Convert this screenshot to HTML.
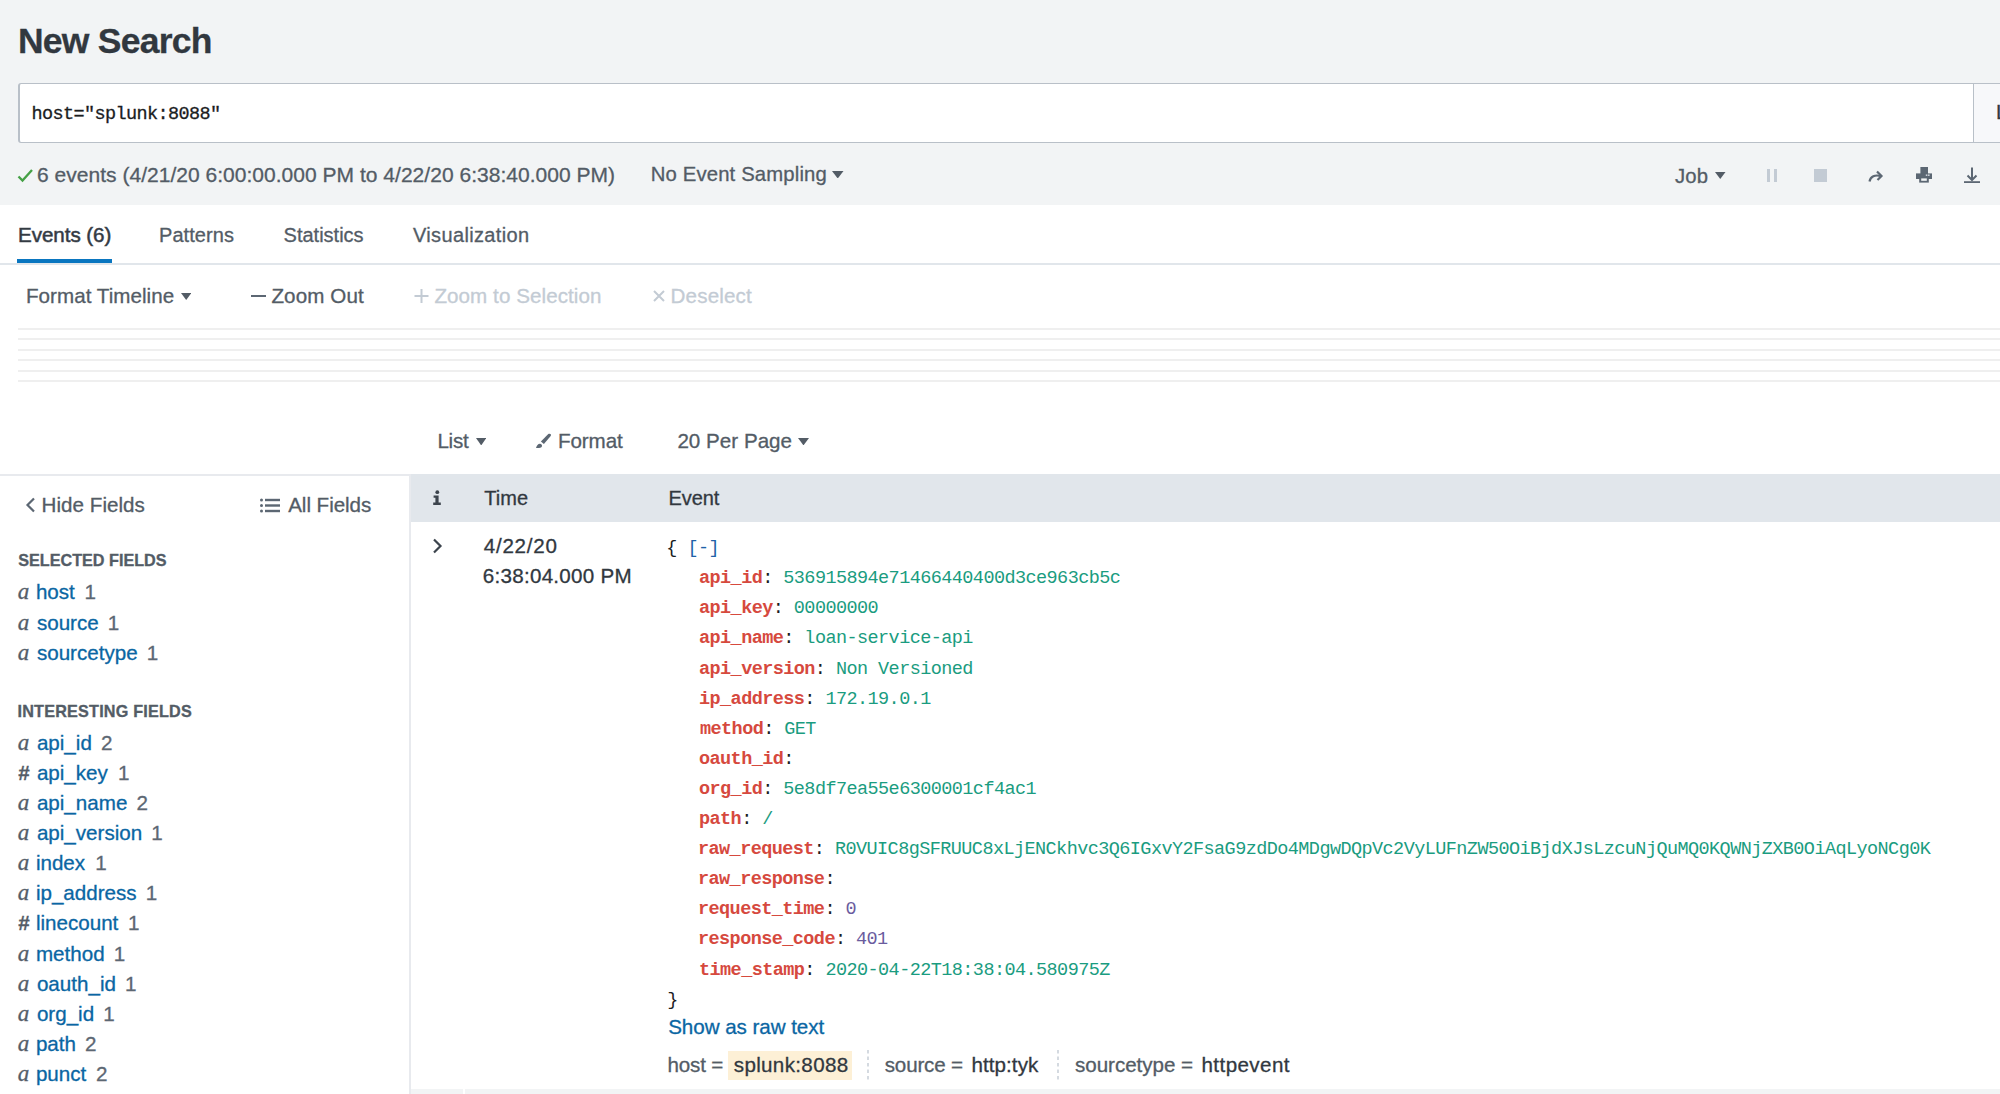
<!DOCTYPE html>
<html><head><meta charset="utf-8"><style>
html,body{margin:0;padding:0;width:2000px;height:1094px;overflow:hidden;background:#fff;position:relative}
.t{position:absolute;line-height:1;white-space:pre;-webkit-text-stroke-width:0.3px}
b{font-weight:bold}
</style></head><body>
<div style="position:absolute;left:0;top:0;width:2000px;height:205px;background:#f2f4f5"></div>
<div style="position:absolute;left:18px;top:83px;width:2000px;height:58px;border:1px solid #b9c0c8;border-left-width:2px;border-radius:3px;background:#fff"></div>
<div style="position:absolute;left:1973px;top:84px;width:27px;height:58px;background:#f7f8fa;border-left:1px solid #b9c0c8"></div>
<svg style="position:absolute;left:17px;top:168px" width="17" height="15" viewBox="0 0 17 15"><path d="M1.5 8.5 L5.5 12.5 L15 2" fill="none" stroke="#45a045" stroke-width="2.3"/></svg>
<svg style="position:absolute;left:832px;top:170.7px" width="11.5" height="7.5" viewBox="0 0 10 7" preserveAspectRatio="none"><path d="M0 0 L10 0 L5 7 Z" fill="#535c66"/></svg>
<svg style="position:absolute;left:1715px;top:172px" width="10.5" height="7" viewBox="0 0 10 7" preserveAspectRatio="none"><path d="M0 0 L10 0 L5 7 Z" fill="#535c66"/></svg>
<svg style="position:absolute;left:181px;top:293px" width="10.400000000000006" height="7" viewBox="0 0 10 7" preserveAspectRatio="none"><path d="M0 0 L10 0 L5 7 Z" fill="#535c66"/></svg>
<svg style="position:absolute;left:475.6px;top:437.6px" width="10.399999999999977" height="7.399999999999977" viewBox="0 0 10 7" preserveAspectRatio="none"><path d="M0 0 L10 0 L5 7 Z" fill="#535c66"/></svg>
<svg style="position:absolute;left:798px;top:437.6px" width="11" height="7.399999999999977" viewBox="0 0 10 7" preserveAspectRatio="none"><path d="M0 0 L10 0 L5 7 Z" fill="#535c66"/></svg>
<div style="position:absolute;left:1767px;top:169px;width:3px;height:13px;background:#c3cbd4"></div>
<div style="position:absolute;left:1774px;top:169px;width:3px;height:13px;background:#c3cbd4"></div>
<div style="position:absolute;left:1813.5px;top:169px;width:13px;height:13px;background:#c3cbd4"></div>
<svg style="position:absolute;left:1868px;top:170px" width="16" height="13" viewBox="0 0 16 13"><path d="M1.5 11.5 C2.5 6.5 7 4.5 12.5 6" fill="none" stroke="#5c6773" stroke-width="2.2"/><path d="M9 1.5 L13.5 6 L9.5 10" fill="none" stroke="#5c6773" stroke-width="2.2"/></svg>
<svg style="position:absolute;left:1916px;top:167px" width="16" height="16" viewBox="0 0 16 16"><rect x="4.4" y="0" width="7.6" height="7" fill="#5c6773"/><rect x="0" y="6.4" width="16" height="5.6" fill="#5c6773"/><rect x="3.2" y="10.4" width="9.6" height="5.2" fill="#5c6773"/><rect x="5.2" y="11.4" width="5.6" height="2.4" fill="#f2f4f5"/><rect x="9.8" y="7.4" width="1.6" height="1.6" fill="#c9cfd6"/><rect x="12" y="7.4" width="1.6" height="1.6" fill="#c9cfd6"/></svg>
<svg style="position:absolute;left:1964px;top:167px" width="16" height="16" viewBox="0 0 16 16"><path d="M8 0.5 V13" stroke="#5c6773" stroke-width="2" fill="none"/><path d="M3.5 8.5 L8 13 L12.5 8.5" stroke="#5c6773" stroke-width="2" fill="none"/><rect x="0" y="14.2" width="16" height="1.8" fill="#5c6773"/></svg>
<div style="position:absolute;left:0;top:263px;width:2000px;height:2px;background:#e1e6eb"></div>
<div style="position:absolute;left:17px;top:259px;width:95px;height:4px;background:#0a76c0"></div>
<div style="position:absolute;left:251px;top:295px;width:14.5px;height:2px;background:#5c6773"></div>
<svg style="position:absolute;left:414px;top:289px" width="15" height="14" viewBox="0 0 15 14"><path d="M7.5 0 V14 M0.5 7 H14.5" stroke="#c3cbd4" stroke-width="2"/></svg>
<svg style="position:absolute;left:653px;top:290px" width="12" height="12" viewBox="0 0 12 12"><path d="M1 1 L11 11 M11 1 L1 11" stroke="#c3cbd4" stroke-width="2"/></svg>
<div style="position:absolute;left:18px;top:328px;width:1982px;height:2px;background:#efefef"></div>
<div style="position:absolute;left:18px;top:338px;width:1982px;height:2px;background:#efefef"></div>
<div style="position:absolute;left:18px;top:349px;width:1982px;height:2px;background:#efefef"></div>
<div style="position:absolute;left:18px;top:359px;width:1982px;height:2px;background:#efefef"></div>
<div style="position:absolute;left:18px;top:370px;width:1982px;height:2px;background:#efefef"></div>
<div style="position:absolute;left:18px;top:380px;width:1982px;height:2px;background:#efefef"></div>
<svg style="position:absolute;left:535px;top:433px" width="17" height="17" viewBox="0 0 17 17"><path d="M13.3 1.1 C14.1 0.4 15.3 0.5 15.8 1.3 C16.1 1.9 16 2.4 15.7 2.9 L8.9 10.9 L5.9 8.4 Z" fill="#5c6773"/><path d="M1 14.9 C1.8 12.6 3 10.6 5.1 10.7 C6.9 10.9 7.6 12.7 6.6 14 C5.6 15.1 3.2 15.2 1 14.9 Z" fill="#5c6773"/></svg>
<div style="position:absolute;left:0;top:474px;width:2000px;height:2px;background:#e8eaee"></div>
<div style="position:absolute;left:409px;top:474px;width:2px;height:620px;background:#e8eaee"></div>
<div style="position:absolute;left:411px;top:474px;width:1589px;height:48px;background:#e1e6eb"></div>
<svg style="position:absolute;left:25px;top:497px" width="11" height="16" viewBox="0 0 11 16"><path d="M9 1.5 L2.5 8 L9 14.5" fill="none" stroke="#5c6773" stroke-width="2.2"/></svg>
<svg style="position:absolute;left:260px;top:498px" width="21" height="15" viewBox="0 0 21 15"><g fill="#5c6773"><circle cx="1.5" cy="2" r="1.5"/><circle cx="1.5" cy="7.5" r="1.5"/><circle cx="1.5" cy="13" r="1.5"/><rect x="5" y="0.8" width="15" height="2.4"/><rect x="5" y="6.3" width="15" height="2.4"/><rect x="5" y="11.8" width="15" height="2.4"/></g></svg>
<svg style="position:absolute;left:433px;top:490px" width="8" height="15" viewBox="0 0 8 15"><circle cx="4.3" cy="2.2" r="1.9" fill="#3c444d"/><path d="M0.6 5.6 H5.6 V12.6 H7.8 V15 H0.2 V12.6 H2.4 V7.8 H0.6 Z" fill="#3c444d"/></svg>
<svg style="position:absolute;left:432px;top:538px" width="11" height="16" viewBox="0 0 11 16"><path d="M2 1.5 L8.5 8 L2 14.5" fill="none" stroke="#3c444d" stroke-width="2.2"/></svg>
<div style="position:absolute;left:728px;top:1050.5px;width:124px;height:29.5px;background:#fdf0d6"></div>
<svg style="position:absolute;left:867px;top:1050px" width="2" height="31" viewBox="0 0 2 31"><path d="M1 0 V31" stroke="#c3cbd4" stroke-width="1.4" stroke-dasharray="3.5 3"/></svg>
<svg style="position:absolute;left:1057px;top:1050px" width="2" height="31" viewBox="0 0 2 31"><path d="M1 0 V31" stroke="#c3cbd4" stroke-width="1.4" stroke-dasharray="3.5 3"/></svg>
<div style="position:absolute;left:411px;top:1089px;width:52px;height:5px;background:#f2f4f5"></div>
<div style="position:absolute;left:465px;top:1089px;width:1535px;height:5px;background:#f2f4f5"></div>
<div class=t style="left:17.90px;top:24.00px;font:normal bold 35.5px 'Liberation Sans', sans-serif;line-height:1;color:#31383f;letter-spacing:-0.742px;">New Search</div>
<div class=t style="left:31.50px;top:105.50px;font:normal normal 18.5px 'Liberation Mono', monospace;line-height:1;color:#1b1d1f;letter-spacing:-0.602px;">host="splunk:8088"</div>
<div class=t style="left:1996.00px;top:102.30px;font:normal normal 20.6px 'Liberation Sans', sans-serif;line-height:1;color:#31383f;letter-spacing:0.000px;">L</div>
<div class=t style="left:37.00px;top:163.50px;font:normal normal 21px 'Liberation Sans', sans-serif;line-height:1;color:#535c66;letter-spacing:0.022px;">6 events (4/21/20 6:00:00.000 PM to 4/22/20 6:38:40.000 PM)</div>
<div class=t style="left:650.80px;top:164.20px;font:normal normal 20.3px 'Liberation Sans', sans-serif;line-height:1;color:#535c66;letter-spacing:0.148px;">No Event Sampling</div>
<div class=t style="left:1675.00px;top:165.50px;font:normal normal 20.3px 'Liberation Sans', sans-serif;line-height:1;color:#535c66;letter-spacing:0.140px;">Job</div>
<div class=t style="left:18.00px;top:224.60px;font:normal normal 20.6px 'Liberation Sans', sans-serif;line-height:1;color:#31383f;letter-spacing:-0.054px;-webkit-text-stroke:0.55px #3c444d">Events (6)</div>
<div class=t style="left:159.00px;top:224.60px;font:normal normal 20px 'Liberation Sans', sans-serif;line-height:1;color:#535c66;letter-spacing:0.074px;">Patterns</div>
<div class=t style="left:283.60px;top:224.60px;font:normal normal 20px 'Liberation Sans', sans-serif;line-height:1;color:#535c66;letter-spacing:-0.002px;">Statistics</div>
<div class=t style="left:413.00px;top:224.60px;font:normal normal 20px 'Liberation Sans', sans-serif;line-height:1;color:#535c66;letter-spacing:0.350px;">Visualization</div>
<div class=t style="left:26.00px;top:286.00px;font:normal normal 20.6px 'Liberation Sans', sans-serif;line-height:1;color:#535c66;letter-spacing:0.033px;">Format Timeline</div>
<div class=t style="left:271.40px;top:286.00px;font:normal normal 20.6px 'Liberation Sans', sans-serif;line-height:1;color:#535c66;letter-spacing:0.109px;">Zoom Out</div>
<div class=t style="left:434.40px;top:286.00px;font:normal normal 20.6px 'Liberation Sans', sans-serif;line-height:1;color:#c3cbd4;letter-spacing:0.067px;">Zoom to Selection</div>
<div class=t style="left:670.60px;top:286.00px;font:normal normal 20.6px 'Liberation Sans', sans-serif;line-height:1;color:#c3cbd4;letter-spacing:0.143px;">Deselect</div>
<div class=t style="left:437.40px;top:431.00px;font:normal normal 20.6px 'Liberation Sans', sans-serif;line-height:1;color:#535c66;letter-spacing:-0.242px;">List</div>
<div class=t style="left:558.00px;top:431.00px;font:normal normal 20.6px 'Liberation Sans', sans-serif;line-height:1;color:#535c66;letter-spacing:-0.100px;">Format</div>
<div class=t style="left:677.40px;top:431.00px;font:normal normal 20.6px 'Liberation Sans', sans-serif;line-height:1;color:#535c66;letter-spacing:0.016px;">20 Per Page</div>
<div class=t style="left:41.60px;top:495.00px;font:normal normal 20.6px 'Liberation Sans', sans-serif;line-height:1;color:#535c66;letter-spacing:0.029px;">Hide Fields</div>
<div class=t style="left:288.20px;top:495.00px;font:normal normal 20.6px 'Liberation Sans', sans-serif;line-height:1;color:#535c66;letter-spacing:-0.049px;">All Fields</div>
<div class=t style="left:18.20px;top:552.40px;font:normal bold 16.2px 'Liberation Sans', sans-serif;line-height:1;color:#535c66;letter-spacing:-0.000px;">SELECTED FIELDS</div>
<div class=t style="left:17.50px;top:703.00px;font:normal bold 16.2px 'Liberation Sans', sans-serif;line-height:1;color:#535c66;letter-spacing:0.201px;">INTERESTING FIELDS</div>
<div class=t style="left:17.70px;top:580.40px;font:italic normal 23px 'Liberation Serif', serif;line-height:1;color:#535c66;letter-spacing:0.000px;-webkit-text-stroke:0.35px #5c6773">a</div>
<div class=t style="left:35.90px;top:582.40px;font:normal normal 20.6px 'Liberation Sans', sans-serif;line-height:1;color:#0a66a3;letter-spacing:0.000px;">host</div>
<div class=t style="left:84.60px;top:582.40px;font:normal normal 20.6px 'Liberation Sans', sans-serif;line-height:1;color:#5c6773">1</div>
<div class=t style="left:17.70px;top:610.50px;font:italic normal 23px 'Liberation Serif', serif;line-height:1;color:#535c66;letter-spacing:0.000px;-webkit-text-stroke:0.35px #5c6773">a</div>
<div class=t style="left:36.90px;top:612.50px;font:normal normal 20.6px 'Liberation Sans', sans-serif;line-height:1;color:#0a66a3;letter-spacing:0.000px;">source</div>
<div class=t style="left:107.76px;top:612.50px;font:normal normal 20.6px 'Liberation Sans', sans-serif;line-height:1;color:#5c6773">1</div>
<div class=t style="left:17.70px;top:640.60px;font:italic normal 23px 'Liberation Serif', serif;line-height:1;color:#535c66;letter-spacing:0.000px;-webkit-text-stroke:0.35px #5c6773">a</div>
<div class=t style="left:36.90px;top:642.60px;font:normal normal 20.6px 'Liberation Sans', sans-serif;line-height:1;color:#0a66a3;letter-spacing:0.000px;">sourcetype</div>
<div class=t style="left:146.68px;top:642.60px;font:normal normal 20.6px 'Liberation Sans', sans-serif;line-height:1;color:#5c6773">1</div>
<div class=t style="left:17.70px;top:730.70px;font:italic normal 23px 'Liberation Serif', serif;line-height:1;color:#535c66;letter-spacing:0.000px;-webkit-text-stroke:0.35px #5c6773">a</div>
<div class=t style="left:36.90px;top:732.70px;font:normal normal 20.6px 'Liberation Sans', sans-serif;line-height:1;color:#0a66a3;letter-spacing:0.000px;">api_id</div>
<div class=t style="left:100.91px;top:732.70px;font:normal normal 20.6px 'Liberation Sans', sans-serif;line-height:1;color:#5c6773">2</div>
<div class=t style="left:18.00px;top:762.83px;font:italic bold 20.5px 'Liberation Sans', sans-serif;line-height:1;color:#535c66;letter-spacing:0.000px;">#</div>
<div class=t style="left:36.90px;top:762.83px;font:normal normal 20.6px 'Liberation Sans', sans-serif;line-height:1;color:#0a66a3;letter-spacing:0.000px;">api_key</div>
<div class=t style="left:118.09px;top:762.83px;font:normal normal 20.6px 'Liberation Sans', sans-serif;line-height:1;color:#5c6773">1</div>
<div class=t style="left:17.70px;top:790.96px;font:italic normal 23px 'Liberation Serif', serif;line-height:1;color:#535c66;letter-spacing:0.000px;-webkit-text-stroke:0.35px #5c6773">a</div>
<div class=t style="left:36.90px;top:792.96px;font:normal normal 20.6px 'Liberation Sans', sans-serif;line-height:1;color:#0a66a3;letter-spacing:0.000px;">api_name</div>
<div class=t style="left:136.40px;top:792.96px;font:normal normal 20.6px 'Liberation Sans', sans-serif;line-height:1;color:#5c6773">2</div>
<div class=t style="left:17.70px;top:821.09px;font:italic normal 23px 'Liberation Serif', serif;line-height:1;color:#535c66;letter-spacing:0.000px;-webkit-text-stroke:0.35px #5c6773">a</div>
<div class=t style="left:36.90px;top:823.09px;font:normal normal 20.6px 'Liberation Sans', sans-serif;line-height:1;color:#0a66a3;letter-spacing:0.000px;">api_version</div>
<div class=t style="left:151.27px;top:823.09px;font:normal normal 20.6px 'Liberation Sans', sans-serif;line-height:1;color:#5c6773">1</div>
<div class=t style="left:17.70px;top:851.22px;font:italic normal 23px 'Liberation Serif', serif;line-height:1;color:#535c66;letter-spacing:0.000px;-webkit-text-stroke:0.35px #5c6773">a</div>
<div class=t style="left:35.90px;top:853.22px;font:normal normal 20.6px 'Liberation Sans', sans-serif;line-height:1;color:#0a66a3;letter-spacing:0.000px;">index</div>
<div class=t style="left:95.34px;top:853.22px;font:normal normal 20.6px 'Liberation Sans', sans-serif;line-height:1;color:#5c6773">1</div>
<div class=t style="left:17.70px;top:881.35px;font:italic normal 23px 'Liberation Serif', serif;line-height:1;color:#535c66;letter-spacing:0.000px;-webkit-text-stroke:0.35px #5c6773">a</div>
<div class=t style="left:35.90px;top:883.35px;font:normal normal 20.6px 'Liberation Sans', sans-serif;line-height:1;color:#0a66a3;letter-spacing:0.000px;">ip_address</div>
<div class=t style="left:145.85px;top:883.35px;font:normal normal 20.6px 'Liberation Sans', sans-serif;line-height:1;color:#5c6773">1</div>
<div class=t style="left:18.00px;top:913.48px;font:italic bold 20.5px 'Liberation Sans', sans-serif;line-height:1;color:#535c66;letter-spacing:0.000px;">#</div>
<div class=t style="left:35.90px;top:913.48px;font:normal normal 20.6px 'Liberation Sans', sans-serif;line-height:1;color:#0a66a3;letter-spacing:0.000px;">linecount</div>
<div class=t style="left:128.11px;top:913.48px;font:normal normal 20.6px 'Liberation Sans', sans-serif;line-height:1;color:#5c6773">1</div>
<div class=t style="left:17.70px;top:941.61px;font:italic normal 23px 'Liberation Serif', serif;line-height:1;color:#535c66;letter-spacing:0.000px;-webkit-text-stroke:0.35px #5c6773">a</div>
<div class=t style="left:35.90px;top:943.61px;font:normal normal 20.6px 'Liberation Sans', sans-serif;line-height:1;color:#0a66a3;letter-spacing:0.000px;">method</div>
<div class=t style="left:113.64px;top:943.61px;font:normal normal 20.6px 'Liberation Sans', sans-serif;line-height:1;color:#5c6773">1</div>
<div class=t style="left:17.70px;top:971.74px;font:italic normal 23px 'Liberation Serif', serif;line-height:1;color:#535c66;letter-spacing:0.000px;-webkit-text-stroke:0.35px #5c6773">a</div>
<div class=t style="left:36.90px;top:973.74px;font:normal normal 20.6px 'Liberation Sans', sans-serif;line-height:1;color:#0a66a3;letter-spacing:0.000px;">oauth_id</div>
<div class=t style="left:124.96px;top:973.74px;font:normal normal 20.6px 'Liberation Sans', sans-serif;line-height:1;color:#5c6773">1</div>
<div class=t style="left:17.70px;top:1001.87px;font:italic normal 23px 'Liberation Serif', serif;line-height:1;color:#535c66;letter-spacing:0.000px;-webkit-text-stroke:0.35px #5c6773">a</div>
<div class=t style="left:36.90px;top:1003.87px;font:normal normal 20.6px 'Liberation Sans', sans-serif;line-height:1;color:#0a66a3;letter-spacing:0.000px;">org_id</div>
<div class=t style="left:103.19px;top:1003.87px;font:normal normal 20.6px 'Liberation Sans', sans-serif;line-height:1;color:#5c6773">1</div>
<div class=t style="left:17.70px;top:1032.00px;font:italic normal 23px 'Liberation Serif', serif;line-height:1;color:#535c66;letter-spacing:0.000px;-webkit-text-stroke:0.35px #5c6773">a</div>
<div class=t style="left:35.90px;top:1034.00px;font:normal normal 20.6px 'Liberation Sans', sans-serif;line-height:1;color:#0a66a3;letter-spacing:0.000px;">path</div>
<div class=t style="left:85.03px;top:1034.00px;font:normal normal 20.6px 'Liberation Sans', sans-serif;line-height:1;color:#5c6773">2</div>
<div class=t style="left:17.70px;top:1062.13px;font:italic normal 23px 'Liberation Serif', serif;line-height:1;color:#535c66;letter-spacing:0.000px;-webkit-text-stroke:0.35px #5c6773">a</div>
<div class=t style="left:35.90px;top:1064.13px;font:normal normal 20.6px 'Liberation Sans', sans-serif;line-height:1;color:#0a66a3;letter-spacing:0.000px;">punct</div>
<div class=t style="left:96.06px;top:1064.13px;font:normal normal 20.6px 'Liberation Sans', sans-serif;line-height:1;color:#5c6773">2</div>
<div class=t style="left:484.30px;top:487.70px;font:normal normal 20px 'Liberation Sans', sans-serif;line-height:1;color:#31383f;letter-spacing:0.007px;">Time</div>
<div class=t style="left:668.60px;top:487.70px;font:normal normal 20px 'Liberation Sans', sans-serif;line-height:1;color:#31383f;letter-spacing:-0.121px;">Event</div>
<div class=t style="left:483.70px;top:535.80px;font:normal normal 20.6px 'Liberation Sans', sans-serif;line-height:1;color:#31383f;letter-spacing:0.757px;">4/22/20</div>
<div class=t style="left:482.70px;top:565.70px;font:normal normal 20.6px 'Liberation Sans', sans-serif;line-height:1;color:#31383f;letter-spacing:0.281px;">6:38:04.000 PM</div>
<div class=t style="left:666.30px;top:540.10px;font:normal normal 18.5px 'Liberation Mono', monospace;line-height:1;color:#1b1d1f;letter-spacing:0.000px;letter-spacing:-0.570px;-webkit-text-stroke-width:0">{ <span style="color:#1f62a8">[-]</span></div>
<div class=t style="left:699.00px;top:570.20px;font:normal normal 18.5px 'Liberation Mono', monospace;line-height:1;color:#1b1d1f;letter-spacing:0.000px;letter-spacing:-0.570px;-webkit-text-stroke-width:0"><b style="color:#d6493e">api_id</b>: <span style="color:#1a9c80">536915894e71466440400d3ce963cb5c</span></div>
<div class=t style="left:699.00px;top:600.30px;font:normal normal 18.5px 'Liberation Mono', monospace;line-height:1;color:#1b1d1f;letter-spacing:0.000px;letter-spacing:-0.570px;-webkit-text-stroke-width:0"><b style="color:#d6493e">api_key</b>: <span style="color:#1a9c80">00000000</span></div>
<div class=t style="left:699.00px;top:630.40px;font:normal normal 18.5px 'Liberation Mono', monospace;line-height:1;color:#1b1d1f;letter-spacing:0.000px;letter-spacing:-0.570px;-webkit-text-stroke-width:0"><b style="color:#d6493e">api_name</b>: <span style="color:#1a9c80">loan-service-api</span></div>
<div class=t style="left:699.00px;top:660.50px;font:normal normal 18.5px 'Liberation Mono', monospace;line-height:1;color:#1b1d1f;letter-spacing:0.000px;letter-spacing:-0.570px;-webkit-text-stroke-width:0"><b style="color:#d6493e">api_version</b>: <span style="color:#1a9c80">Non Versioned</span></div>
<div class=t style="left:699.00px;top:690.60px;font:normal normal 18.5px 'Liberation Mono', monospace;line-height:1;color:#1b1d1f;letter-spacing:0.000px;letter-spacing:-0.570px;-webkit-text-stroke-width:0"><b style="color:#d6493e">ip_address</b>: <span style="color:#1a9c80">172.19.0.1</span></div>
<div class=t style="left:700.00px;top:720.70px;font:normal normal 18.5px 'Liberation Mono', monospace;line-height:1;color:#1b1d1f;letter-spacing:0.000px;letter-spacing:-0.570px;-webkit-text-stroke-width:0"><b style="color:#d6493e">method</b>: <span style="color:#1a9c80">GET</span></div>
<div class=t style="left:699.00px;top:750.80px;font:normal normal 18.5px 'Liberation Mono', monospace;line-height:1;color:#1b1d1f;letter-spacing:0.000px;letter-spacing:-0.570px;-webkit-text-stroke-width:0"><b style="color:#d6493e">oauth_id</b>: <span style="color:#1a9c80"></span></div>
<div class=t style="left:699.00px;top:780.90px;font:normal normal 18.5px 'Liberation Mono', monospace;line-height:1;color:#1b1d1f;letter-spacing:0.000px;letter-spacing:-0.570px;-webkit-text-stroke-width:0"><b style="color:#d6493e">org_id</b>: <span style="color:#1a9c80">5e8df7ea55e6300001cf4ac1</span></div>
<div class=t style="left:699.00px;top:811.00px;font:normal normal 18.5px 'Liberation Mono', monospace;line-height:1;color:#1b1d1f;letter-spacing:0.000px;letter-spacing:-0.570px;-webkit-text-stroke-width:0"><b style="color:#d6493e">path</b>: <span style="color:#1a9c80">/</span></div>
<div class=t style="left:698.00px;top:841.10px;font:normal normal 18.5px 'Liberation Mono', monospace;line-height:1;color:#1b1d1f;letter-spacing:0.000px;letter-spacing:-0.570px;-webkit-text-stroke-width:0"><b style="color:#d6493e">raw_request</b>: <span style="color:#1a9c80">R0VUIC8gSFRUUC8xLjENCkhvc3Q6IGxvY2FsaG9zdDo4MDgwDQpVc2VyLUFnZW50OiBjdXJsLzcuNjQuMQ0KQWNjZXB0OiAqLyoNCg0K</span></div>
<div class=t style="left:698.00px;top:871.20px;font:normal normal 18.5px 'Liberation Mono', monospace;line-height:1;color:#1b1d1f;letter-spacing:0.000px;letter-spacing:-0.570px;-webkit-text-stroke-width:0"><b style="color:#d6493e">raw_response</b>: <span style="color:#1a9c80"></span></div>
<div class=t style="left:698.00px;top:901.30px;font:normal normal 18.5px 'Liberation Mono', monospace;line-height:1;color:#1b1d1f;letter-spacing:0.000px;letter-spacing:-0.570px;-webkit-text-stroke-width:0"><b style="color:#d6493e">request_time</b>: <span style="color:#6a5c9e">0</span></div>
<div class=t style="left:698.00px;top:931.40px;font:normal normal 18.5px 'Liberation Mono', monospace;line-height:1;color:#1b1d1f;letter-spacing:0.000px;letter-spacing:-0.570px;-webkit-text-stroke-width:0"><b style="color:#d6493e">response_code</b>: <span style="color:#6a5c9e">401</span></div>
<div class=t style="left:699.00px;top:961.50px;font:normal normal 18.5px 'Liberation Mono', monospace;line-height:1;color:#1b1d1f;letter-spacing:0.000px;letter-spacing:-0.570px;-webkit-text-stroke-width:0"><b style="color:#d6493e">time_stamp</b>: <span style="color:#1a9c80">2020-04-22T18:38:04.580975Z</span></div>
<div class=t style="left:667.20px;top:991.60px;font:normal normal 18.5px 'Liberation Mono', monospace;line-height:1;color:#1b1d1f;letter-spacing:0.000px;letter-spacing:-0.570px;-webkit-text-stroke-width:0">}</div>
<div class=t style="left:668.20px;top:1017.30px;font:normal normal 20.6px 'Liberation Sans', sans-serif;line-height:1;color:#0a66a3;letter-spacing:-0.052px;">Show as raw text</div>
<div class=t style="left:667.50px;top:1054.50px;font:normal normal 20.6px 'Liberation Sans', sans-serif;line-height:1;color:#535c66;letter-spacing:-0.189px;">host =</div>
<div class=t style="left:733.75px;top:1054.50px;font:normal normal 20.6px 'Liberation Sans', sans-serif;line-height:1;color:#31383f;letter-spacing:0.334px;">splunk:8088</div>
<div class=t style="left:884.75px;top:1054.50px;font:normal normal 20.6px 'Liberation Sans', sans-serif;line-height:1;color:#535c66;letter-spacing:-0.183px;">source =</div>
<div class=t style="left:971.50px;top:1054.50px;font:normal normal 20.6px 'Liberation Sans', sans-serif;line-height:1;color:#31383f;letter-spacing:0.059px;">http:tyk</div>
<div class=t style="left:1075.00px;top:1054.50px;font:normal normal 20.6px 'Liberation Sans', sans-serif;line-height:1;color:#535c66;letter-spacing:-0.042px;">sourcetype =</div>
<div class=t style="left:1201.50px;top:1054.50px;font:normal normal 20.6px 'Liberation Sans', sans-serif;line-height:1;color:#31383f;letter-spacing:0.412px;">httpevent</div>
</body></html>
